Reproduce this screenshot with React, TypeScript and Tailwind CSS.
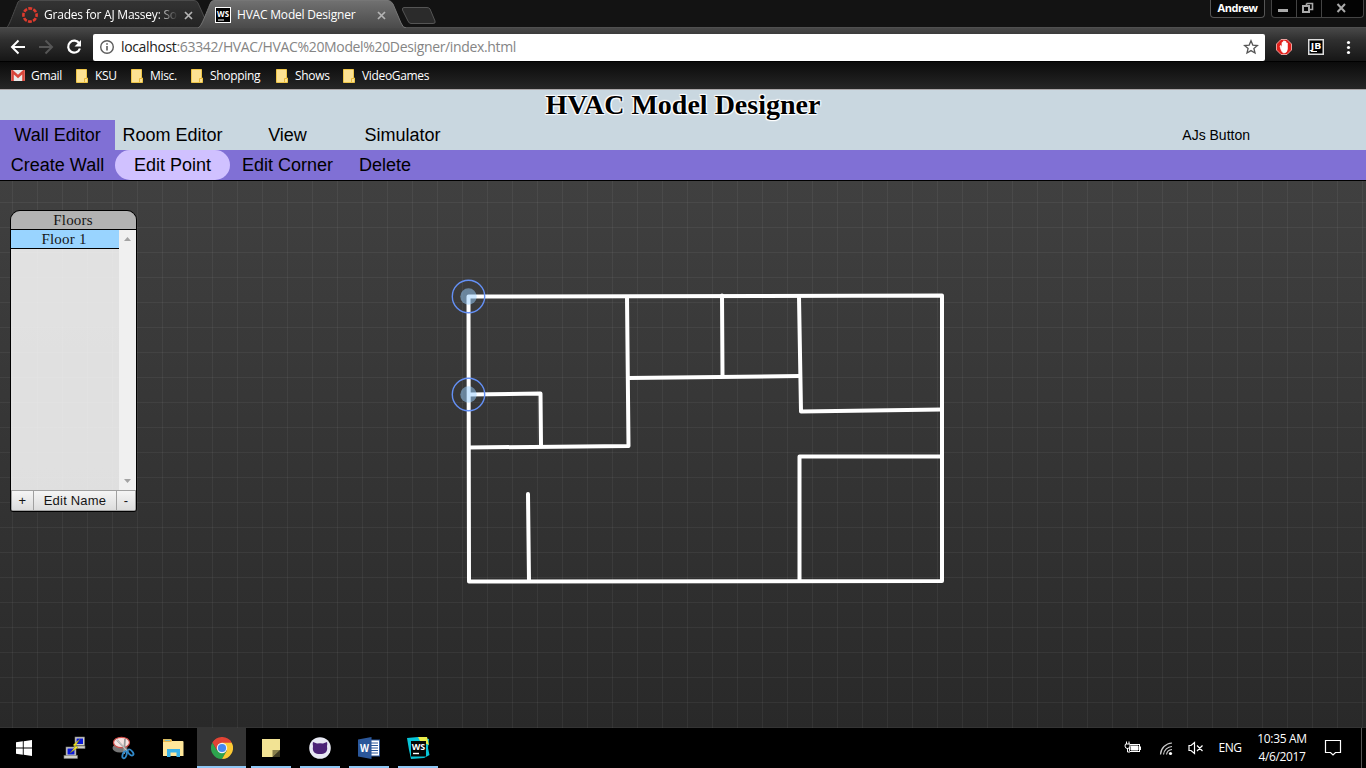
import type { ReactNode } from "react";

const ui = "font-['Open_Sans','Noto_Sans',sans-serif]";
const arial = "font-['Liberation_Sans',sans-serif]";
const times = "font-['Liberation_Serif',serif]";

function CloseX({ className }: { className: string }) {
  return (
    <svg className={className} width="9" height="9" viewBox="0 0 9 9">
      <path d="M1 1 L8 8 M8 1 L1 8" stroke="#b4b4b4" strokeWidth="1.7" />
    </svg>
  );
}

function TabStrip() {
  return (
    <div className="relative flex h-[28px] bg-[#131313]">
      <svg className="absolute inset-0" width="1366" height="28" viewBox="0 0 1366 28">
        <defs>
          <linearGradient id="inactive" x1="0" y1="0" x2="0" y2="1">
            <stop offset="0" stopColor="#343434" />
            <stop offset="1" stopColor="#232323" />
          </linearGradient>
          <linearGradient id="active" x1="0" y1="0" x2="0" y2="1">
            <stop offset="0" stopColor="#717171" />
            <stop offset="1" stopColor="#4a4a4a" />
          </linearGradient>
        </defs>
        <path d="M6 28 C9 26 10 22 18 2 Q19 0.5 21 0.5 H194 Q197 0.5 198 3 L206 21 L203 28 Z" fill="url(#inactive)" stroke="#4b4b4b" />
        <path d="M0 27.5 H1366" stroke="#505050" />
        <path d="M197 28.5 C201 26 202 24 210 4 Q211 0.5 214 0.5 H388 Q391 0.5 393 4 L401 23 Q403 28 406 28.5 Z" fill="url(#active)" />
        <path d="M198 28 C201 26 202 24 210 4 Q211 0.5 214 0.5 H388 Q391 0.5 393 4 L401 23 Q403 28 406 28" fill="none" stroke="#767676" />
        <path d="M404 7.5 H427 Q429 7.5 430 9 L435 21 Q436 23.500 433 23.500 H411 Q409 23.500 408 21 L402.500 10 Q402 7.500 404 7.500 Z" fill="#2b2b2b" stroke="#555" />
      </svg>
      <div className="relative flex w-[205px] items-center pl-[22px] pt-[2px]">
        <svg width="16" height="16" viewBox="0 0 16 16">
          <circle cx="8" cy="8" r="6.6" fill="none" stroke="#dd3b2e" strokeWidth="2.6" strokeDasharray="3.9 1.28" strokeDashoffset="1.9" />
        </svg>
        <div className={`${ui} ml-[6px] w-[134px] overflow-hidden whitespace-nowrap text-[12px] leading-[16px] tracking-[-0.22px] text-white [mask-image:linear-gradient(to_right,black_84%,transparent)]`}>
          Grades for AJ Massey: So
        </div>
        <CloseX className="ml-[6px]" />
      </div>
      <div className="relative flex w-[200px] items-center pl-[10px] pt-[2px]">
        <svg width="16" height="16" viewBox="0 0 16 16">
          <rect x="0.500" y="0.500" width="15" height="15" fill="#000" stroke="#fff" />
          <text x="8" y="9.500" textAnchor="middle" fontFamily="Open Sans, sans-serif" fontWeight="700" fontSize="8.500" textLength="12" lengthAdjust="spacingAndGlyphs" fill="#fff">WS</text>
          <path d="M3 13 H9" stroke="#fff" />
        </svg>
        <div className={`${ui} ml-[6px] w-[134px] whitespace-nowrap text-[12px] leading-[16px] tracking-[-0.2px] text-white`}>HVAC Model Designer</div>
        <CloseX className="ml-[6px]" />
      </div>
      <div className={`${ui} relative ml-auto mr-[2px] flex items-start`}>
        <div className="mr-[6px] flex h-[18px] w-[55px] items-center justify-center rounded-b-[4px] border border-t-0 border-[#555] bg-[#090909] text-[11px] font-bold tracking-[-0.45px] text-white">Andrew</div>
        <div className="flex h-[18px] w-[93px] rounded-b-[4px] border border-t-0 border-[#444] bg-[#030303]">
          <svg width="91" height="17" viewBox="0 0 91 17">
            <path d="M24.500 0 V17 M49.500 0 V17" stroke="#444" />
            <rect x="6" y="9" width="10" height="3" fill="#aaa" />
            <path d="M34.500 3.500 H40.500 V9.500 H38 M34.500 3.500 V5" fill="none" stroke="#aaa" strokeWidth="1.600" />
            <rect x="31" y="6" width="6" height="6" fill="none" stroke="#aaa" strokeWidth="2" />
            <path d="M65.500 4 L73 12 M73 4 L65.500 12" stroke="#aaa" strokeWidth="2" />
          </svg>
        </div>
      </div>
    </div>
  );
}

function Toolbar() {
  return (
    <div className="flex h-[33px] items-center bg-[linear-gradient(#484848,#303030_35%,#161616)]">
      <svg className="shrink-0" width="93" height="33" viewBox="0 0 93 33" fill="none" strokeWidth="2">
        <path d="M25 19 H12.500 M18.500 12.500 L12 19 L18.500 25.500" stroke="#fff" />
        <path d="M39 19 H51.500 M45.500 12.500 L52 19 L45.500 25.500" stroke="#565656" />
        <path d="M79.300 15.500 A6 6 0 1 0 79.900 20.500" stroke="#fff" strokeWidth="2.200" />
        <path d="M81 12 V18.500 H74.500 Z" fill="#fff" />
      </svg>
      <div className="mt-[5px] flex h-[27px] w-[1172px] items-center rounded-[2px] bg-white px-[6px]">
        <svg width="16" height="16" viewBox="0 0 16 16">
          <circle cx="8" cy="8" r="6.300" fill="none" stroke="#5c5c5c" strokeWidth="1.400" />
          <path d="M8 7 V11.500 M8 4.300 V5.800" stroke="#5c5c5c" strokeWidth="1.600" />
        </svg>
        <div className={`${ui} ml-[6px] whitespace-nowrap text-[14px] leading-[20px] tracking-[-0.35px] text-[#858585]`}>
          <span className="text-[#222]">localhost</span>:63342/HVAC/HVAC%20Model%20Designer/index.html
        </div>
        <svg className="ml-auto" width="16" height="16" viewBox="0 0 16 16">
          <path d="M8 1.800 L9.800 6.100 L14.400 6.500 L10.900 9.500 L12 14 L8 11.600 L4 14 L5.100 9.500 L1.600 6.500 L6.200 6.100 Z" fill="none" stroke="#555" strokeWidth="1.300" />
        </svg>
      </div>
      <svg className="shrink-0" width="101" height="33" viewBox="1265 28 101 33">
        <path d="M1281 39.500 H1287 L1291.500 44 V50 L1287 54.500 H1281 L1276.500 50 V44 Z" fill="#e3211c" stroke="#e9a09d" />
        <path d="M1280 46 L1281 45.500 L1282 48 V42.500 H1283.300 V46 V41 H1284.700 V46 V41.500 H1286 V46 V43 H1287.400 V49 Q1287 53 1284 53 Q1281.500 53 1280 46 Z" fill="#fff" stroke="#fff" strokeWidth="0.700" />
        <rect x="1308.750" y="39.750" width="14.500" height="14.500" fill="#000" stroke="#ddd" strokeWidth="1.500" />
        <text x="1316" y="48.500" textAnchor="middle" fontFamily="Open Sans, sans-serif" fontWeight="700" fontSize="8.500" fill="#fff" textLength="10.500" lengthAdjust="spacingAndGlyphs">JB</text>
        <path d="M1311 51.500 H1317" stroke="#fff" />
        <g fill="#fff">
          <circle cx="1348.500" cy="42.500" r="1.600" />
          <circle cx="1348.500" cy="47.500" r="1.600" />
          <circle cx="1348.500" cy="52.500" r="1.600" />
        </g>
      </svg>
    </div>
  );
}

function Folder() {
  return (
    <svg width="12" height="14" viewBox="0 0 12 14">
      <path d="M0.500 0.500 H10.500 V9 H11.500 V13.500 H0.500 Z" fill="#fde293" stroke="#efc649" />
      <path d="M8.500 13 V9.500 H11" fill="none" stroke="#e9b93c" />
    </svg>
  );
}

function Bookmark({ label, className }: { label: string; className: string }) {
  return (
    <div className={`flex shrink-0 items-center ${className}`}>
      <Folder />
      <span className="ml-[7px] whitespace-nowrap">{label}</span>
    </div>
  );
}

function Bookmarks() {
  return (
    <div className={`${ui} flex h-[28px] items-center border-t border-black bg-[linear-gradient(#0b0b0b,#262626)] pl-[11px] text-[12px] leading-[16px] tracking-[-0.33px] text-white`}>
      <div className="flex w-[65px] shrink-0 items-center">
        <svg width="14" height="11" viewBox="0 0 14 11">
          <rect width="14" height="11" rx="1" fill="#e9e9e9" />
          <path d="M1.500 11 V1.500 L7 6.500 L12.500 1.500 V11" fill="none" stroke="#d9463b" strokeWidth="2.600" />
        </svg>
        <span className="ml-[6px]">Gmail</span>
      </div>
      <Bookmark label="KSU" className="w-[55px]" />
      <Bookmark label="Misc." className="w-[60px]" />
      <Bookmark label="Shopping" className="w-[85px]" />
      <Bookmark label="Shows" className="w-[67px]" />
      <Bookmark label="VideoGames" className="w-[100px]" />
    </div>
  );
}

function Item({ children, width = "w-[115px]", className = "" }: { children: ReactNode; width?: string; className?: string }) {
  return <div className={`flex h-[30px] items-center justify-center whitespace-nowrap ${width} ${className}`}>{children}</div>;
}

function Header() {
  return (
    <div className={`${arial} flex h-[92px] flex-col border-t border-b border-t-[#aaa6a8] border-b-black bg-[#c9d7e0] text-[18px] leading-[30px] text-black`}>
      <h1 className={`${times} h-[30px] text-center text-[28px] font-bold leading-[30px] [text-shadow:-1px_-1px_1px_white,1px_-1px_1px_white,-1px_1px_1px_white,1px_1px_1px_white,0_0_2px_white]`}>
        HVAC Model Designer
      </h1>
      <div className="flex h-[30px]">
        <Item className="bg-[#8070d5]">Wall Editor</Item>
        <Item>Room Editor</Item>
        <Item>View</Item>
        <Item>Simulator</Item>
        <div className="ml-auto mr-[116px] text-[14px]">AJs Button</div>
      </div>
      <div className="flex h-[30px] bg-[#8070d5]">
        <Item>Create Wall</Item>
        <Item className="rounded-[15px] bg-[#d0c1ff]">Edit Point</Item>
        <Item>Edit Corner</Item>
        <Item width="w-[80px]">Delete</Item>
      </div>
    </div>
  );
}

const walls = [
  "M468.500 296.500 L942 295.500 V581 L469 581.500 Z",
  "M627 297 L628.500 446 L469 447.500",
  "M628 378 L800 376",
  "M722 295.500 L722.500 376",
  "M799 297 L801 411.500 L942 409.500",
  "M942 456.500 H799.500 V581",
  "M469 394.500 L540.500 393.500 L541 446",
  "M528 494 L529 581",
];

function Floors() {
  const button = "flex items-center justify-center border border-[#a0a0a0] bg-[linear-gradient(#f5f5f5,#dcdcdc)]";
  return (
    <div className="relative flex h-[302px] w-[127px] flex-col overflow-hidden rounded-t-[10px] rounded-b-[3px] border border-black text-[15px] text-[#151515]">
      <div className={`${times} h-[19px] border-b border-black bg-[#b2b2b2] pr-[1px] text-center leading-[19px] tracking-[0.2px]`}>Floors</div>
      <div className="flex h-[260px]">
        <div className="w-[108px] bg-[#ffffffd8]">
          <div className={`${times} h-[19px] border-b border-black bg-[#99d4ff] pr-[2px] text-center leading-[18px] tracking-[0.2px]`}>Floor 1</div>
        </div>
        <svg width="17" height="260" viewBox="0 0 17 260">
          <rect width="17" height="260" fill="#f0f0f0" />
          <path d="M5 11 L8.500 7 L12 11 Z M5 249 L8.500 253 L12 249 Z" fill="#a3a3a3" />
        </svg>
      </div>
      <div className={`${arial} flex h-[21px] text-[13px] tracking-[0.2px]`}>
        <div className={`${button} w-[23px]`}>+</div>
        <div className={`${button} w-[82px] border-x-0`}>Edit Name</div>
        <div className={`${button} w-[20px]`}>-</div>
      </div>
    </div>
  );
}

function Canvas() {
  return (
    <div className="relative h-[547px] bg-[linear-gradient(#404040,#292929)] pl-[10px] pt-[29px]">
      <svg className="absolute inset-0" width="1366" height="547" viewBox="0 181 1366 547">
        <defs>
          <pattern id="grid" x="12" y="177" width="25" height="25" patternUnits="userSpaceOnUse">
            <path d="M0.500 0 V25 M0 0.500 H25" stroke="#fff" strokeOpacity="0.05" />
          </pattern>
        </defs>
        <rect y="181" width="1366" height="547" fill="url(#grid)" />
        <g fill="none" stroke="#fff" strokeWidth="4" strokeLinecap="round" strokeLinejoin="round">
          {walls.map((d) => (
            <path key={d} d={d} />
          ))}
        </g>
        {[296.5, 394.5].map((y) => (
          <g key={y}>
            <circle cx="468.500" cy={y} r="8.200" fill="#99cfff" fillOpacity="0.500" />
            <circle cx="468.500" cy={y} r="16.200" fill="none" stroke="#6490f5" strokeWidth="1.400" />
          </g>
        ))}
      </svg>
      <Floors />
    </div>
  );
}

function Slot({ children, open = false, active = false }: { children: ReactNode; open?: boolean; active?: boolean }) {
  return (
    <div className={`flex h-[40px] w-[49px] flex-col items-center ${active ? "bg-[#343434]" : ""}`}>
      <div className="flex h-[38px] items-center pt-[2px]">{children}</div>
      {open && <div className={`h-[2px] bg-[#8fc7f5] ${active ? "w-[49px]" : "w-[40px]"}`} />}
    </div>
  );
}

function Taskbar() {
  return (
    <div className={`${ui} flex h-[40px] bg-black text-white`}>
      <div className="flex w-[50px] items-center pl-[16px]">
        <svg width="16" height="16" viewBox="0 0 16 16" fill="#fff">
          <path d="M0 2.300 L6.800 1.300 V7.500 H0 Z M7.700 1.200 L16 0 V7.500 H7.700 Z M0 8.400 H6.800 V14.700 L0 13.700 Z M7.700 8.400 H16 V16 L7.700 14.800 Z" />
        </svg>
      </div>
      <Slot>
        <svg width="24" height="24" viewBox="0 0 24 24">
          <g fill="#d0d0c8" stroke="#777" strokeWidth="0.600">
            <rect x="12" y="1" width="9.500" height="8.500" />
            <rect x="11" y="10" width="11" height="2.500" />
            <rect x="3" y="11" width="10" height="9" />
            <rect x="1" y="19.500" width="13.500" height="3" />
          </g>
          <rect x="13.500" y="2.500" width="6.500" height="5.500" fill="#0a18d8" />
          <rect x="4.500" y="12.500" width="7" height="6" fill="#0a18d8" />
          <path d="M17 3 L10 9 L12.500 10.500 L7 17 L15 11.500 L12.500 9.500 Z" fill="#f8ec23" stroke="#777000" strokeWidth="0.400" />
        </svg>
      </Slot>
      <Slot>
        <svg width="24" height="24" viewBox="0 0 24 24">
          <ellipse cx="8" cy="12" rx="7.500" ry="4.500" fill="#777" />
          <ellipse cx="9.500" cy="6.500" rx="8" ry="5.200" fill="#f5e3e1" stroke="#cf4b47" strokeWidth="1.200" />
          <path d="M5 4 L16 16 M13 3 L12 18" stroke="#999" strokeWidth="1.800" />
          <path d="M5 4 L16 16" stroke="#e5e5e5" strokeWidth="0.700" />
          <g fill="none" stroke="#3189c9" strokeWidth="1.800">
            <ellipse cx="12.500" cy="18.800" rx="1.900" ry="3.600" transform="rotate(20 12.500 19)" />
            <ellipse cx="18.500" cy="16.500" rx="2" ry="3.600" transform="rotate(-45 18.500 16.500)" />
          </g>
        </svg>
      </Slot>
      <Slot>
        <svg width="22" height="20" viewBox="0 0 22 20">
          <path d="M1 2 Q1 1 2 1 H9 L10 3 H20.500 Q21.500 3 21.500 4 V18 H1 Z" fill="#ffe79a" />
          <path d="M1 3 Q1 1 2 1 H9 L10 3 L9 4 H1 Z" fill="#e9b84c" />
          <rect x="3" y="1.800" width="5" height="1" fill="#6fc3dd" />
          <path d="M5 11 H18 V19 H14.500 V14.500 H8.500 V19 H5 Z" fill="#39b2e8" />
        </svg>
      </Slot>
      <Slot open active>
        <svg width="22" height="22" viewBox="0 0 22 22">
          <path d="M11 11 L1.470 5.500 A11 11 0 0 1 20.530 5.500 Z" fill="#e24435" />
          <path d="M1.470 5.500 A11 11 0 0 0 11 22 L15.760 13.750 H11 L6.240 13.750 Z" fill="#2da44e" />
          <path d="M20.530 5.500 A11 11 0 0 1 11 22 L15.760 13.750 L11 5.500 Z" fill="#fcc934" />
          <path d="M1.470 5.500 L6.240 13.750 L8 8 L11 5.500 H20.530 L19 3 L11 0.500 L4 3 Z" fill="#e24435" />
          <circle cx="11" cy="11" r="5.200" fill="#f4f4f4" />
          <circle cx="11" cy="11" r="4.100" fill="#4688f1" />
        </svg>
      </Slot>
      <Slot open>
        <svg width="18" height="18" viewBox="0 0 18 18">
          <path d="M0 0 H18 V11 L11 18 H0 Z" fill="#f2e394" />
          <path d="M10.500 18 V11 H18 Z" fill="#89804c" />
          <path d="M10.500 18 L18 11 V18 Z" fill="#3f3b24" />
        </svg>
      </Slot>
      <Slot open>
        <svg width="22" height="22" viewBox="0 0 22 22">
          <circle cx="11" cy="11" r="10.800" fill="#e8e9f4" />
          <path d="M4 5 L8 6.500 Q11 6 14 6.500 L18 5 Q18.600 7 18 9 Q19 15 15 16.500 Q11 17.500 7 16.500 Q3 15 4 9 Q3.400 7 4 5 Z" fill="#4c2477" />
        </svg>
      </Slot>
      <Slot open>
        <svg width="22" height="22" viewBox="0 0 22 22">
          <rect x="12" y="3" width="9.500" height="16" fill="#fff" stroke="#2b579a" />
          <path d="M13 6 H20 M13 8.500 H20 M13 11 H20 M13 13.500 H20 M13 16 H20" stroke="#2b579a" />
          <path d="M0 2.500 L13.500 0 V22 L0 19.500 Z" fill="#2b579a" />
          <text x="6.600" y="15" textAnchor="middle" fontFamily="Open Sans, sans-serif" fontWeight="700" fontSize="11" textLength="9" lengthAdjust="spacingAndGlyphs" fill="#fff">W</text>
        </svg>
      </Slot>
      <Slot open>
        <svg width="24" height="24" viewBox="0 0 24 24">
          <path d="M1 2 L12 1 L23 3 L22 12 L23.500 19 L18 22 L5 23 L3 14 Z" fill="#08c5d8" />
          <path d="M12 1 H21 L23 9 L14 5 Z" fill="#e9ed4b" />
          <rect x="5" y="5" width="15" height="15.500" fill="#050505" />
          <text x="12.500" y="13.500" textAnchor="middle" fontFamily="Open Sans, sans-serif" fontWeight="700" fontSize="9.500" textLength="13.500" lengthAdjust="spacingAndGlyphs" fill="#fff">WS</text>
          <path d="M7 17.500 H13" stroke="#fff" strokeWidth="1.400" />
        </svg>
      </Slot>
      <div className="ml-auto flex items-center">
        <svg width="91" height="40" viewBox="1121 728 91 40" fill="none" stroke="#fff">
          <rect x="1129.500" y="744.500" width="10" height="7" />
          <path d="M1131 746 H1138 V750 H1131 Z" fill="#fff" />
          <path d="M1140.500 746.500 V750" />
          <path d="M1125.500 744 H1130 V746 Q1130 748.500 1127.500 748.500 Q1125 748.500 1125 746 Z M1126.500 741.500 V744 M1129 741.500 V744 M1127.500 748 V752 H1130" fill="#000" />
          <path d="M1160.500 754.500 A12 12 0 0 1 1172 743 M1163.500 754.500 A9 9 0 0 1 1172 746.500 M1166.500 754.500 A6 6 0 0 1 1172 749.500" stroke="#ccc" strokeWidth="1.200" />
          <circle cx="1170.500" cy="753.500" r="1.600" fill="#fff" stroke="none" />
          <path d="M1189 745.500 H1191 L1194.500 742.500 V753.500 L1191 750.500 H1189 Z M1197 745.500 L1202.500 751 M1202.500 745.500 L1197 751" strokeWidth="1.200" />
        </svg>
        <div className="w-[36px] text-center text-[12px] leading-[16px] tracking-[-0.4px]">ENG</div>
        <div className="flex w-[68px] flex-col items-center whitespace-nowrap text-[12px] leading-[18px] tracking-[-0.35px]">
          <div>10:35 AM</div>
          <div>4/6/2017</div>
        </div>
        <svg width="50" height="40" viewBox="1316 728 50 40" fill="none">
          <path d="M1325.500 740.500 H1340.500 V752.500 H1335.500 L1333 755 L1330.500 752.500 H1325.500 Z" stroke="#fff" strokeWidth="1.200" />
          <path d="M1361.500 728 V768" stroke="#555" />
        </svg>
      </div>
    </div>
  );
}

export default function App() {
  return (
    <div className="flex h-[768px] w-[1366px] flex-col overflow-hidden bg-black">
      <TabStrip />
      <Toolbar />
      <Bookmarks />
      <Header />
      <Canvas />
      <Taskbar />
    </div>
  );
}
